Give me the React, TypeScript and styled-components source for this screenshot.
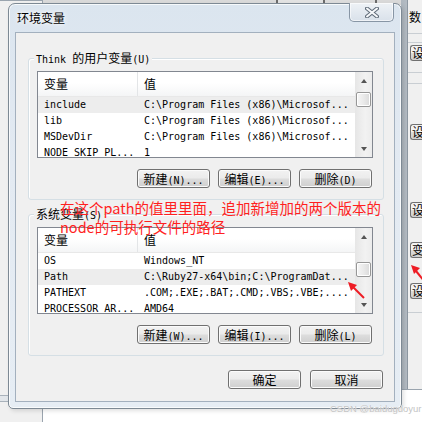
import React from "react";
import styled, { createGlobalStyle } from "styled-components";

const cjk = `"Noto Sans CJK SC", "Noto Sans", sans-serif`;
const mono = `"DejaVu Sans Mono", "Liberation Mono", monospace`;

const GlobalStyle = createGlobalStyle`
  html, body {
    margin: 0;
    padding: 0;
    background: #ffffff;
  }
  body {
    width: 422px;
    height: 422px;
    overflow: hidden;
  }
`;

type Row = [string, string];

const userVars: Row[] = [
  ["include", "C:\\Program Files (x86)\\Microsof..."],
  ["lib", "C:\\Program Files (x86)\\Microsof..."],
  ["MSDevDir", "C:\\Program Files (x86)\\Microsof..."],
  ["NODE_SKIP_PL...", "1"],
];

const systemVars: Row[] = [
  ["OS", "Windows_NT"],
  ["Path", "C:\\Ruby27-x64\\bin;C:\\ProgramDat..."],
  ["PATHEXT", ".COM;.EXE;.BAT;.CMD;.VBS;.VBE;...."],
  ["PROCESSOR_AR...", "AMD64"],
];

const VarList = ({ rows, selected, thumbTop }: { rows: Row[]; selected: number; thumbTop: number }) => (
  <ListBox>
    <ListMain>
      <Header>
        <HeaderCell>变量</HeaderCell>
        <HeaderCell>值</HeaderCell>
      </Header>
      {rows.map(([name, value], i) => (
        <ListRow key={name} $selected={i === selected}>
          <Cell>{name}</Cell>
          <Cell>{value}</Cell>
        </ListRow>
      ))}
    </ListMain>
    <ScrollBar>
      <ArrowBtn>
        <Triangle $up />
      </ArrowBtn>
      <Thumb $top={thumbTop} />
      <Track />
      <ArrowBtn>
        <Triangle />
      </ArrowBtn>
    </ScrollBar>
  </ListBox>
);

export default function App() {
  return (
    <Desktop>
      <GlobalStyle />
      <TopStrip />
      <LeftWindow>
        <LeftRule />
      </LeftWindow>
      <RightWindow>
        <RightClient>
          <Fragment $mt={10}>数</Fragment>
          <Rule $mt={9} />
          <Rule $mt={8} />
          <PeekBtn $mt={2}>设</PeekBtn>
          <Rule $mt={11} />
          <Rule $mt={10} />
          <PeekBtn $mt={40}>设</PeekBtn>
          <PeekBtn $mt={62}>设</PeekBtn>
          <PeekBtn $mt={24}>变量</PeekBtn>
          <PeekBtn $mt={25}>设</PeekBtn>
          <Rule $mt={13} />
        </RightClient>
      </RightWindow>

      <Dialog>
        <TitleBar>
          <Title>环境变量</Title>
          <CloseBtn>
            <svg width="14" height="11" viewBox="0 0 14 11">
              <path d="M2 1.5 L12 9.5 M12 1.5 L2 9.5" stroke="#5f6b78" strokeWidth="4" strokeLinecap="round" />
              <path d="M2 1.5 L12 9.5 M12 1.5 L2 9.5" stroke="#f7f9fb" strokeWidth="2" strokeLinecap="round" />
            </svg>
          </CloseBtn>
        </TitleBar>
        <Client>
          <GroupBox>
            <Legend>
              <Lat>Think </Lat>的用户变量<Lat>(U)</Lat>
            </Legend>
            <VarList rows={userVars} selected={0} thumbTop={3} />
            <ButtonRow>
              <Button>新建<Lat>(N)...</Lat></Button>
              <Button>编辑<Lat>(E)...</Lat></Button>
              <Button>删除<Lat>(D)</Lat></Button>
            </ButtonRow>
          </GroupBox>
          <GroupBox>
            <Legend>
              系统变量<Lat>(S)</Lat>
            </Legend>
            <VarList rows={systemVars} selected={1} thumbTop={17} />
            <ButtonRow>
              <Button>新建<Lat>(W)...</Lat></Button>
              <Button>编辑<Lat>(I)...</Lat></Button>
              <Button>删除<Lat>(L)</Lat></Button>
            </ButtonRow>
          </GroupBox>
          <DialogActions>
            <Button>确定</Button>
            <Button>取消</Button>
          </DialogActions>
        </Client>
      </Dialog>

      <Annotation>
        <div>在这个path的值里里面，追加新增加的两个版本的</div>
        <div>node的可执行文件的路径</div>
      </Annotation>

      <Arrows width="422" height="422" viewBox="0 0 422 422">
        <line x1="364" y1="298" x2="353" y2="287" stroke="#ee1c24" strokeWidth="2" />
        <polygon points="348,282 357,285 351,291" fill="#ee1c24" />
        <line x1="425" y1="282" x2="416" y2="271" stroke="#ee1c24" strokeWidth="2" />
        <polygon points="411,265 420,268 414,274" fill="#ee1c24" />
      </Arrows>

      <Watermark>CSDN @baidugdoyur</Watermark>
    </Desktop>
  );
}

const Desktop = styled.div`
  position: relative;
  width: 422px;
  height: 422px;
  overflow: hidden;
  background: #ffffff;
  font-family: ${cjk};
  font-size: 12px;
  color: #000;
`;

const TopStrip = styled.div`
  position: absolute;
  top: 0;
  left: 0;
  right: 0;
  height: 5px;
  background: linear-gradient(to right, #d9d9d9 0 276px, #6b6b6b 276px 278px, #e2e2e2 278px 323px, #6b6b6b 323px 325px, #dcdcdc 325px 375px, #6b6b6b 375px 377px, #d9d9d9 377px);
`;

const LeftWindow = styled.div`
  position: absolute;
  left: -10px;
  top: 0;
  width: 53px;
  height: 440px;
  box-sizing: border-box;
  border: 1px solid #9aa4ae;
  background: #f0f0f0;
  display: flex;
  flex-direction: column;
  justify-content: flex-end;
  padding-bottom: 37px;
`;

const LeftRule = styled.div`
  height: 5px;
  border-top: 1px solid #a9b2bb;
  border-bottom: 1px solid #a9b2bb;
  background: #e2e6ea;
`;

const RightWindow = styled.div`
  position: absolute;
  left: 401px;
  top: -2px;
  width: 40px;
  height: 392px;
  box-sizing: border-box;
  padding-left: 6px;
  background: linear-gradient(to right, #aeb6be, #d3d9df);
  border-bottom: 1px solid #9aa4ae;
`;

const RightClient = styled.div`
  height: 100%;
  border-left: 1px solid #8d97a1;
  background: #f0f0f0;
  display: flex;
  flex-direction: column;
  padding-top: 2px;
  box-sizing: border-box;
`;

const Fragment = styled.div<{ $mt: number }>`
  margin-top: ${(p) => p.$mt}px;
  height: 14px;
  line-height: 14px;
  padding-left: 1px;
`;

const Rule = styled.div<{ $mt: number }>`
  margin-top: ${(p) => p.$mt}px;
  height: 1px;
  background: #c9ced3;
`;

const PeekBtn = styled.div<{ $mt: number }>`
  margin-top: ${(p) => p.$mt}px;
  margin-left: 2px;
  height: 16px;
  line-height: 14px;
  box-sizing: border-box;
  border: 1px solid #707070;
  border-right: none;
  border-radius: 3px 0 0 3px;
  background: linear-gradient(#f2f2f2 50%, #dcdcdc 50%, #cfcfcf);
  padding-left: 1px;
  white-space: nowrap;
  overflow: hidden;
`;

const Dialog = styled.div`
  position: absolute;
  left: 8px;
  top: 3px;
  width: 394px;
  height: 406px;
  box-sizing: border-box;
  border: 1px solid #7d8994;
  border-radius: 7px 7px 5px 5px;
  background: linear-gradient(#dbe5ef, #e3eaf2 40%, #e6edf4);
  box-shadow: inset 0 0 0 1px rgba(255, 255, 255, 0.75), 2px 2px 4px rgba(0, 0, 0, 0.12);
  padding: 0 6px 6px;
  display: flex;
  flex-direction: column;
`;

const TitleBar = styled.div`
  height: 28px;
  display: flex;
  justify-content: space-between;
  align-items: flex-start;
`;

const Title = styled.div`
  line-height: 28px;
  padding-left: 2px;
  font-size: 12px;
  text-shadow: 0 0 6px #ffffff, 0 0 3px #ffffff;
`;

const CloseBtn = styled.div`
  width: 45px;
  height: 19px;
  margin-top: -1px;
  margin-right: 1px;
  box-sizing: border-box;
  border: 1px solid #8896a5;
  border-top: none;
  border-radius: 0 0 5px 5px;
  background: linear-gradient(#eef2f6, #d9e1ea);
  box-shadow: inset 0 0 0 1px rgba(255, 255, 255, 0.6);
  display: flex;
  align-items: center;
  justify-content: center;
`;

const Client = styled.div`
  flex: 1;
  background: #f0f0f0;
  border: 1px solid #a3b0be;
  display: flex;
  flex-direction: column;
  padding: 25px 10px 12px 12px;
`;

const GroupBox = styled.div`
  position: relative;
  border: 1px solid #d5dfe5;
  border-radius: 3px;
  box-shadow: inset 1px 1px 0 #ffffff;
  padding: 12px 10px 11px 8px;
  display: flex;
  flex-direction: column;

  & + & {
    margin-top: 14px;
  }
`;

const Legend = styled.div`
  position: absolute;
  top: -8px;
  left: 5px;
  padding: 0 2px;
  line-height: 14px;
  background: #f0f0f0;
  white-space: nowrap;
`;

const Lat = styled.span`
  font-family: ${mono};
  font-size: 10px;
`;

const ListBox = styled.div`
  height: 87px;
  box-sizing: border-box;
  border: 1px solid #828790;
  background: #ffffff;
  display: flex;
  overflow: hidden;
`;

const ListMain = styled.div`
  flex: 1;
  min-width: 0;
  display: flex;
  flex-direction: column;
`;

const Header = styled.div`
  height: 25px;
  flex-shrink: 0;
  display: grid;
  grid-template-columns: 100px 1fr;
  background: linear-gradient(#ffffff 45%, #f4f5f6);
  border-bottom: 1px solid #e8e8e8;
  box-sizing: border-box;
`;

const HeaderCell = styled.div`
  padding-left: 6px;
  line-height: 24px;
  font-size: 12px;

  &:first-child {
    border-right: 1px solid #e3e5e7;
  }
`;

const ListRow = styled.div<{ $selected: boolean }>`
  height: 16px;
  flex-shrink: 0;
  display: grid;
  grid-template-columns: 100px 1fr;
  background: ${(p) => (p.$selected ? "#ededed" : "transparent")};
`;

const Cell = styled.div`
  padding-left: 6px;
  line-height: 16px;
  font-family: ${mono};
  font-size: 10px;
  white-space: nowrap;
  overflow: hidden;
`;

const ScrollBar = styled.div`
  width: 17px;
  flex-shrink: 0;
  display: flex;
  flex-direction: column;
  background: linear-gradient(to right, #e6e6e6, #f2f2f2 60%, #ececec);
`;

const ArrowBtn = styled.div`
  height: 17px;
  display: flex;
  align-items: center;
  justify-content: center;
`;

const Triangle = styled.div<{ $up?: boolean }>`
  width: 0;
  height: 0;
  border-left: 3.5px solid transparent;
  border-right: 3.5px solid transparent;
  ${(p) => (p.$up ? "border-bottom: 4px solid #555;" : "border-top: 4px solid #555;")}
`;

const Thumb = styled.div<{ $top: number }>`
  margin: ${(p) => p.$top}px 1px 0;
  height: 15px;
  box-sizing: border-box;
  border: 1px solid #979797;
  border-radius: 2px;
  background: linear-gradient(to right, #f6f6f6, #eaeaea 50%, #dadada);
  box-shadow: inset 0 0 0 1px #ffffff;
`;

const Track = styled.div`
  flex: 1;
`;

const ButtonRow = styled.div`
  margin-top: 11px;
  display: flex;
  justify-content: flex-end;
  gap: 8px;
  padding-right: 1px;
`;

const DialogActions = styled.div`
  margin-top: 14px;
  display: flex;
  justify-content: flex-end;
  gap: 9px;
  padding-right: 1px;
`;

const Button = styled.div`
  width: 73px;
  height: 19px;
  box-sizing: border-box;
  border: 1px solid #707070;
  border-radius: 3px;
  background: linear-gradient(#f2f2f2, #ebebeb 48%, #dddddd 52%, #cfcfcf);
  box-shadow: inset 0 0 0 1px #fbfbfb;
  text-align: center;
  line-height: 17px;
  font-size: 12px;
  white-space: nowrap;
`;

const Annotation = styled.div`
  position: absolute;
  left: 60px;
  top: 198px;
  color: #ff1f1f;
  font-family: ${cjk};
  font-size: 14.5px;
  line-height: 19px;
  white-space: nowrap;
`;

const Arrows = styled.svg`
  position: absolute;
  left: 0;
  top: 0;
  pointer-events: none;
`;

const Watermark = styled.div`
  position: absolute;
  left: 330px;
  top: 403px;
  font-family: "Liberation Sans", Arial, sans-serif;
  font-size: 9.5px;
  color: #c4c4c4;
  text-shadow: 0 0 1px #ffffff;
  white-space: nowrap;
`;
